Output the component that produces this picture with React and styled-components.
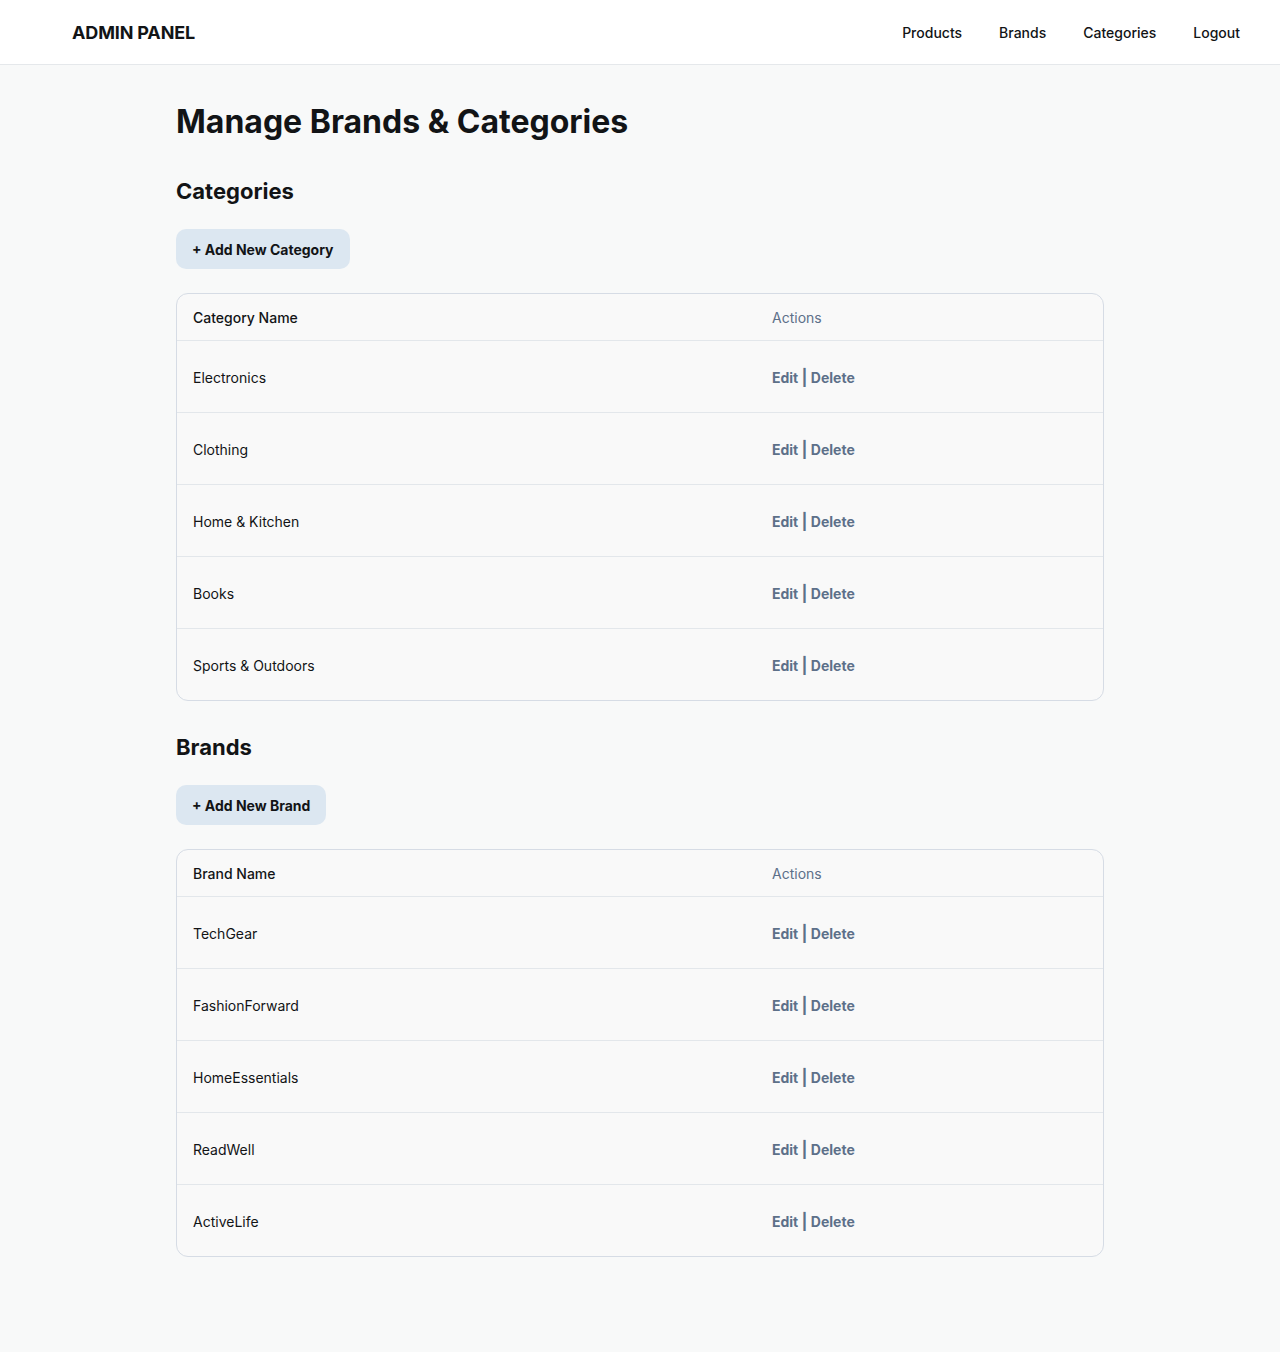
import React from "react";
import styled, { createGlobalStyle } from "styled-components";

const GlobalStyle = createGlobalStyle`
  * { box-sizing: border-box; }
  html, body { margin: 0; padding: 0; }
  body {
    background: #f8f9f9;
    font-family: Inter, "Noto Sans", "Liberation Sans", sans-serif;
    color: #121416;
    -webkit-font-smoothing: antialiased;
  }
`;

const Page = styled.div`
  min-height: 1352px;
  background: #f8f9f9;
`;

const Header = styled.header`
  height: 65px;
  background: #ffffff;
  border-bottom: 1px solid #e5e8eb;
  display: flex;
  align-items: center;
  justify-content: space-between;
  padding: 0 40px 0 72px;
`;

const Logo = styled.div`
  font-size: 18px;
  font-weight: 700;
  letter-spacing: -0.15px;
  color: #121416;
`;

const Nav = styled.nav`
  display: flex;
  align-items: center;
  gap: 37px;
`;

const NavLink = styled.a`
  font-size: 14px;
  font-weight: 500;
  color: #121416;
  text-decoration: none;
  line-height: 21px;
`;

const Main = styled.main`
  width: 928px;
  margin: 0 auto;
  padding: 37px 0 80px;
`;

const Title = styled.h1`
  margin: 0 0 35px;
  font-size: 32px;
  line-height: 40px;
  font-weight: 700;
  letter-spacing: 0;
  color: #121416;
`;

const SectionTitle = styled.h2`
  margin: ${(p) => (p.$first ? "0" : "32px")} 0 24px;
  font-size: 22px;
  line-height: 28px;
  font-weight: 700;
  letter-spacing: 0;
  color: #121416;
`;

const AddButton = styled.button`
  height: 40px;
  padding: 0 16px;
  border: none;
  border-radius: 10px;
  background: #dce7f1;
  font-family: inherit;
  font-size: 14px;
  font-weight: 700;
  color: #121416;
  cursor: pointer;
  margin-bottom: 24px;
`;

const Table = styled.div`
  border: 1px solid #d6dce5;
  border-radius: 12px;
  background: #f9f9f9;
  overflow: hidden;
`;

const Row = styled.div`
  display: grid;
  grid-template-columns: 579px 1fr;
  align-items: center;
  height: ${(p) => (p.$head ? "46px" : "72px")};
  border-top: ${(p) => (p.$head ? "none" : "1px solid #e3e7eb")};
  padding: ${(p) => (p.$head ? "0 16px" : "2px 16px 0")};
  font-size: 14px;
  line-height: 21px;
`;

const NameCell = styled.div`
  color: #121416;
  font-weight: ${(p) => (p.$head ? 500 : 400)};
`;

const ActionHead = styled.div`
  color: #5d7089;
  font-weight: 400;
`;

const Actions = styled.div`
  color: #5d7089;
  font-weight: 700;
  white-space: pre;
`;

const Sep = styled.span`
  font-weight: 700;
  font-size: 16px;
`;

const categories = ["Electronics", "Clothing", "Home & Kitchen", "Books", "Sports & Outdoors"];
const brands = ["TechGear", "FashionForward", "HomeEssentials", "ReadWell", "ActiveLife"];

function DataTable({ heading, items }) {
  return (
    <Table>
      <Row $head>
        <NameCell $head>{heading}</NameCell>
        <ActionHead>Actions</ActionHead>
      </Row>
      {items.map((name) => (
        <Row key={name}>
          <NameCell>{name}</NameCell>
          <Actions>
            Edit <Sep>|</Sep> Delete
          </Actions>
        </Row>
      ))}
    </Table>
  );
}

export default function App() {
  return (
    <Page>
      <GlobalStyle />
      <Header>
        <Logo>ADMIN PANEL</Logo>
        <Nav>
          <NavLink href="#">Products</NavLink>
          <NavLink href="#">Brands</NavLink>
          <NavLink href="#">Categories</NavLink>
          <NavLink href="#">Logout</NavLink>
        </Nav>
      </Header>
      <Main>
        <Title>Manage Brands &amp; Categories</Title>
        <SectionTitle $first>Categories</SectionTitle>
        <AddButton>+ Add New Category</AddButton>
        <DataTable heading="Category Name" items={categories} />
        <SectionTitle>Brands</SectionTitle>
        <AddButton>+ Add New Brand</AddButton>
        <DataTable heading="Brand Name" items={brands} />
      </Main>
    </Page>
  );
}
